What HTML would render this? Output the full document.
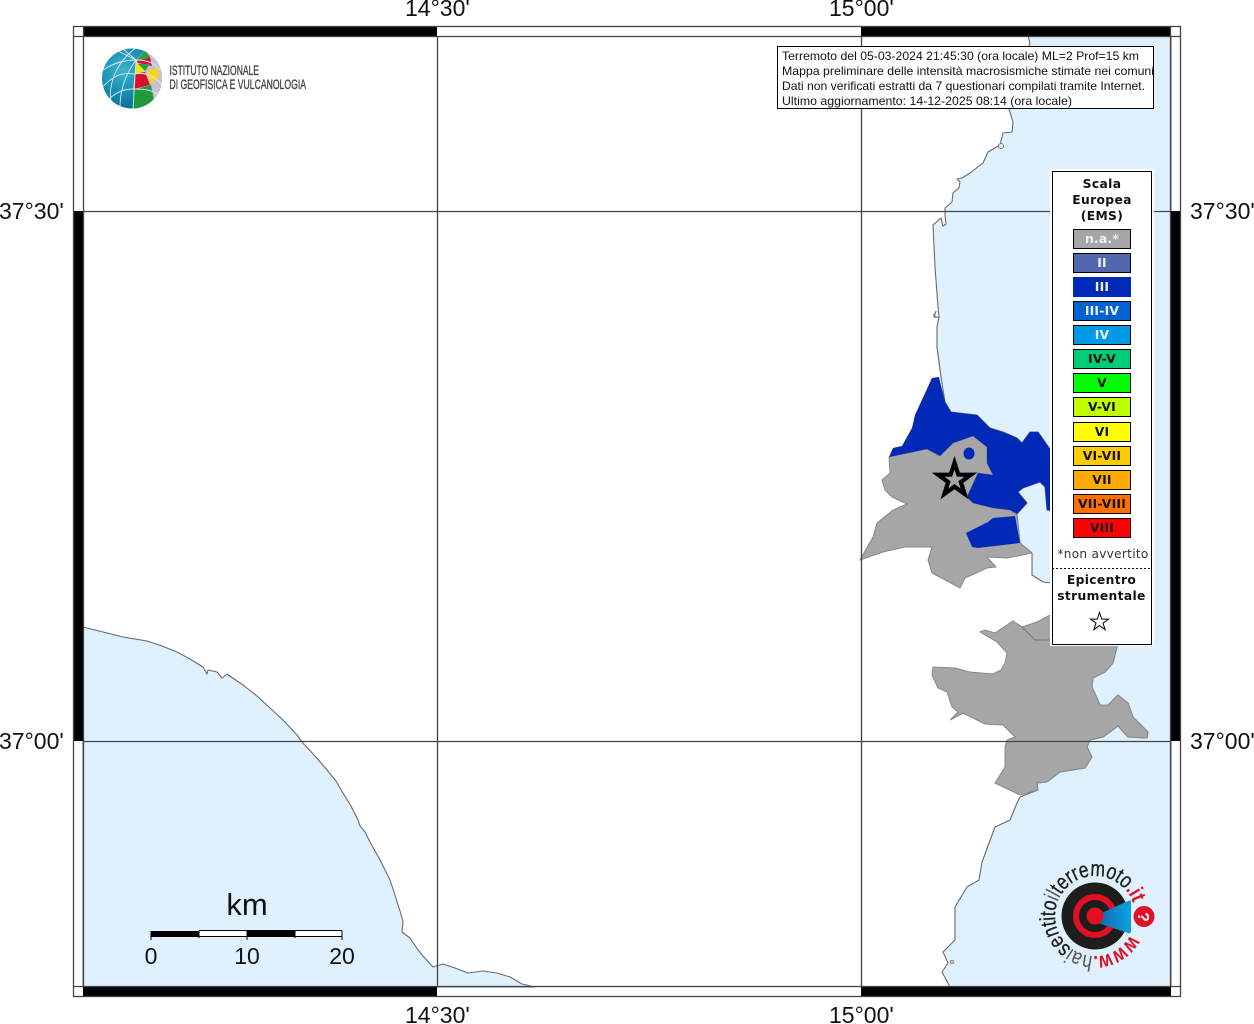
<!DOCTYPE html>
<html><head><meta charset="utf-8"><style>
html,body{margin:0;padding:0;background:#fff;width:1254px;height:1024px;overflow:hidden}
svg{display:block}
.ax{font-family:"Liberation Sans",sans-serif;font-size:23px;fill:#111}
.lg{font-family:"DejaVu Sans",sans-serif;font-size:12.3px;font-weight:bold;text-anchor:middle;letter-spacing:.35px}
.sw{font-family:"DejaVu Sans",sans-serif;font-size:12.4px;font-weight:bold;text-anchor:middle;letter-spacing:.2px}
.info{font-family:"Liberation Sans",sans-serif;font-size:12px;fill:#111}
</style></head><body>
<svg width="1254" height="1024" viewBox="0 0 1254 1024" xmlns="http://www.w3.org/2000/svg">
<rect width="1254" height="1024" fill="#fff"/>
<!-- sea -->
<path d="M83 627L103 632L123 637L147 641L162 646L177 652L190 659L203 667L207 674L208 670L217 672L222 678L227 674L243 685L257 696L270 708L284 721L297 735L302 742L315 756L327 770L336 781L343 793L351 806L358 820L360 826L365 832L370 842L380 860L390 880L394 892L398 905L401 914L403 922L402 932L410 938L416 947L422 955L433 967L443 964L455 968L468 973L483 971L497 973L510 977L522 984L535 987L83 987Z" fill="#dff1ff" stroke="#6a6a6a" stroke-width="1.1" stroke-linejoin="round"/>
<path d="M1028 36L1030 43L1018 75L1009 109L1013 122L1012 132L1003 133L1000 145L988 152L983 163L970 173L962 178L957 179L960 182L959 188L953 193L952 202L945 208L945 215L946 224L943 226L941 218L933 225L935 267L938 307L939 317L937 327L937 347L941 377L945 402L951 412L977 415L990 428L1003 432L1017 438L1022 443L1030 432L1038 432L1052 452L1052 510L1047 510L1045 487L1040 482L1023 488L1018 492L1027 503L1017 514L1020 543L1032 553L1032 575L1043 582L1052 583L1115 640L1117 647L1113 663L1105 672L1093 678L1092 687L1100 705L1108 705L1118 695L1128 703L1133 717L1148 732L1147 738L1128 737L1118 726L1103 737L1090 740L1087 747L1092 757L1085 768L1060 772L1047 782L1037 783L1038 790L1020 797L1017 803L1010 820L995 827L982 862L979 880L967 887L955 907L955 940L943 952L948 963L942 972L950 987L1171 987L1171 36Z" fill="#dff1ff" stroke="#6a6a6a" stroke-width="1.1" stroke-linejoin="round"/>
<circle cx="952" cy="962" r="1.5" fill="none" stroke="#777"/>
<circle cx="1001" cy="146" r="2.5" fill="#dff1ff" stroke="#777"/>
<path d="M939 317L934 317L936 311M936 317L933 314" fill="none" stroke="#777" stroke-width="1.2"/>
<!-- grey land -->
<path d="M889 457L927 449L940 456L953 443L973 436L987 447L987 463L993 475L978 473L967 497L973 503L993 508L1010 510L1017 515L1020 543L1032 553L1007 558L987 557L996 567L987 568L965 578L960 588L932 573L928 560L932 547L905 547L883 552L860 560L873 537L877 523L893 510L907 504L892 497L885 490L882 480L890 473Z" fill="#a6a6a6" stroke="#888" stroke-width="1"/>
<path d="M980 632L985 630L995 633L1013 621L1022 627L1037 622L1050 615L1115 640L1117 647L1113 663L1105 672L1093 678L1092 687L1100 705L1108 705L1118 695L1128 703L1133 717L1148 732L1147 738L1128 737L1118 726L1103 737L1090 740L1087 747L1092 757L1085 768L1060 772L1047 782L1037 783L1038 790L1020 795L995 783L1005 767L1005 747L1007 740L1015 737L1003 725L985 724L963 713L950 720L958 712L952 707L947 692L938 688L932 675L933 667L955 668L970 672L993 674L1001 670L1005 663L1007 653L997 642Z" fill="#a6a6a6" stroke="#888" stroke-width="1"/>
<path d="M1022 627L1035 640L1050 640" fill="none" stroke="#777"/>
<!-- blue land -->
<path d="M889 457L893 448L902 446L912 428L915 415L932 378L939 377L945 402L951 412L977 415L990 428L1003 432L1017 438L1022 443L1030 432L1038 432L1052 452L1052 512L1047 510L1045 487L1040 482L1023 488L1018 492L1027 503L1017 514L1010 510L993 508L973 503L967 497L978 473L993 475L987 463L987 447L973 436L953 443L940 456L927 449Z" fill="#0029b8"/>
<path d="M966 533L988 522L993 518L1015 516L1020 543L978 548L972 547Z" fill="#0029b8"/>
<ellipse cx="969" cy="453.500" rx="5.500" ry="6" fill="#0029b8"/>
<!-- grid -->
<g stroke="#444" stroke-width="1.3">
<line x1="437.500" y1="36" x2="437.500" y2="987"/>
<line x1="861.500" y1="36" x2="861.500" y2="987"/>
<line x1="83" y1="211.500" x2="1171" y2="211.500"/>
<line x1="83" y1="741.500" x2="1171" y2="741.500"/>
</g>
<!-- frame -->
<rect x="83" y="26" width="354" height="10" fill="#000"/>
<rect x="861" y="26" width="310" height="10" fill="#000"/>
<rect x="83" y="987" width="354" height="10" fill="#000"/>
<rect x="861" y="987" width="310" height="10" fill="#000"/>
<rect x="73" y="211" width="10" height="530" fill="#000"/>
<rect x="1171" y="211" width="10" height="530" fill="#000"/>
<g stroke="#444" stroke-width="1.3" fill="none">
<rect x="73.500" y="26.500" width="1107" height="970"/>
<rect x="83.500" y="36.500" width="1087" height="950"/>
<path d="M73 36.500H83M83.500 26V36M1171 36.500H1181M1170.500 26V36M73 986.500H83M1171 986.500H1181"/>
</g>
<!-- star -->
<polygon transform="translate(954.500 480)" points="0,-24 5.400,-7.400 22.800,-7.400 8.800,2.900 14.100,19.400 0,9.200 -14.100,19.400 -8.800,2.900 -22.800,-7.400 -5.400,-7.400" fill="#000"/>
<polygon transform="translate(954.500 480)" points="0,-10.500 2.360,-3.250 10,-3.250 3.850,1.270 6.170,8.500 0,4 -6.170,8.500 -3.850,1.270 -10,-3.250 -2.360,-3.250" fill="#a6a6a6"/>
<!-- axis labels -->
<g class="ax">
<text x="405" y="16">14°30'</text>
<text x="829" y="16">15°00'</text>
<text x="405" y="1023">14°30'</text>
<text x="829" y="1023">15°00'</text>
<text x="-1" y="219">37°30'</text>
<text x="-1" y="749">37°00'</text>
<text x="1190" y="219">37°30'</text>
<text x="1190" y="749">37°00'</text>
</g>
<!-- info box -->
<rect x="777.500" y="46.500" width="376" height="62" fill="#fff" stroke="#000"/>
<g class="info">
<text x="782" y="60" textLength="357" lengthAdjust="spacingAndGlyphs">Terremoto del 05-03-2024 21:45:30 (ora locale) ML=2 Prof=15 km</text>
<text x="782" y="75" textLength="372" lengthAdjust="spacingAndGlyphs">Mappa preliminare delle intensità macrosismiche stimate nei comuni</text>
<text x="782" y="90" textLength="363" lengthAdjust="spacingAndGlyphs">Dati non verificati estratti da 7 questionari compilati tramite Internet.</text>
<text x="782" y="105" textLength="290" lengthAdjust="spacingAndGlyphs">Ultimo aggiornamento: 14-12-2025 08:14 (ora locale)</text>
</g>
<!-- legend -->
<rect x="1050" y="169" width="104" height="477" fill="#fff" shape-rendering="crispEdges"/>
<rect x="1052.500" y="171.500" width="99" height="473" fill="#fff" stroke="#000" shape-rendering="crispEdges"/>
<g class="lg" fill="#111">
<text x="1102" y="188">Scala</text>
<text x="1102" y="204">Europea</text>
<text x="1102" y="220">(EMS)</text>
<text x="1101.500" y="584">Epicentro</text>
<text x="1101.500" y="600">strumentale</text>
</g>
<g shape-rendering="crispEdges" stroke="#000">
<rect x="1073.500" y="229.500" width="57" height="19" fill="#a6a6a6"/>
<rect x="1073.500" y="253.500" width="57" height="19" fill="#5267ae"/>
<rect x="1073" y="277" width="58" height="20" fill="#0029b8" stroke="none"/>
<rect x="1073.500" y="301.500" width="57" height="19" fill="#0063d0"/>
<rect x="1073.500" y="325.500" width="57" height="19" fill="#0099e6"/>
<rect x="1073.500" y="349.500" width="57" height="19" fill="#00cc77"/>
<rect x="1073.500" y="373.500" width="57" height="19" fill="#00ff00"/>
<rect x="1073.500" y="397.500" width="57" height="19" fill="#bfff00"/>
<rect x="1073.500" y="422.500" width="57" height="19" fill="#ffff00"/>
<rect x="1073.500" y="446.500" width="57" height="19" fill="#ffcc00"/>
<rect x="1073.500" y="470.500" width="57" height="19" fill="#ffaa00"/>
<rect x="1073.500" y="494.500" width="57" height="19" fill="#ff7000"/>
<rect x="1073.500" y="518.500" width="57" height="19" fill="#ff0000"/>
</g>
<g class="sw" fill="#f2f2f2">
<text x="1102" y="243">n.a.*</text>
<text x="1102" y="267">II</text>
<text x="1102" y="291">III</text>
<text x="1102" y="315">III-IV</text>
<text x="1102" y="339">IV</text>
</g>
<g class="sw" fill="#111">
<text x="1102" y="363">IV-V</text>
<text x="1102" y="387">V</text>
<text x="1102" y="411">V-VI</text>
<text x="1102" y="436">VI</text>
<text x="1102" y="460">VI-VII</text>
<text x="1102" y="484">VII</text>
<text x="1102" y="508">VII-VIII</text>
<text x="1102" y="532">VIII</text>
</g>
<text x="1103" y="558" font-family="'DejaVu Sans',sans-serif" font-size="12.100" text-anchor="middle" fill="#333" letter-spacing=".3">*non avvertito</text>
<line x1="1052" y1="568.500" x2="1151" y2="568.500" stroke="#000" stroke-dasharray="2 2" shape-rendering="crispEdges"/>
<polygon transform="translate(1099.500 622)" points="0,-9.500 2.200,-2.900 9,-2.900 3.500,1.100 5.600,7.700 0,3.600 -5.600,7.700 -3.500,1.100 -9,-2.900 -2.200,-2.900" fill="#fff" stroke="#000" stroke-width="1"/>
<!-- scale bar -->
<g shape-rendering="crispEdges">
<rect x="151" y="931" width="48" height="6" fill="#000"/>
<rect x="247" y="931" width="48" height="6" fill="#000"/>
<rect x="199" y="931" width="48" height="5" fill="#fff"/>
<rect x="295" y="931" width="47" height="5" fill="#fff"/>
<path d="M199 930.500H342M199 936.500H342M151 931V940M199 931V938M247 931V940M295 931V938M342 931V940" stroke="#000" fill="none"/>
</g>
<text x="247" y="915" font-family="'Liberation Sans',sans-serif" font-size="31" text-anchor="middle" fill="#111">km</text>
<g font-family="'Liberation Sans',sans-serif" font-size="23" text-anchor="middle" fill="#111">
<text x="151" y="964">0</text>
<text x="247" y="964">10</text>
<text x="342" y="964">20</text>
</g>
<!-- INGV logo -->
<defs>
<radialGradient id="gl" cx="35%" cy="35%" r="75%"><stop offset="0" stop-color="#3fb4cf"/><stop offset=".6" stop-color="#1487ad"/><stop offset="1" stop-color="#0a5f86"/></radialGradient>
<clipPath id="gc"><circle cx="132" cy="78.500" r="30"/></clipPath>
<linearGradient id="cone" x1="0" x2="1"><stop offset="0" stop-color="#1262ad"/><stop offset="1" stop-color="#0aa2e2"/></linearGradient>
</defs>
<circle cx="132" cy="78.500" r="30" fill="url(#gl)"/>
<g clip-path="url(#gc)">
<polygon points="136,60 145,50 160,45 170,110 150,115 133,112 133,90" fill="#c9c2d2"/>
<polygon points="136.500,60.500 145,50 150,57" fill="#2f9e3f"/>
<polygon points="137,61 150,57 152,66 138,63" fill="#d8102c"/>
<polygon points="138,64 150,64 145,71" fill="#2f9e3f"/>
<polygon points="147,72 157,67 159,77 150,84" fill="#f3d91a"/>
<polygon points="135,74 145,72 150,85 134,89" fill="#d8102c"/>
<polygon points="133,90 151,85 153,95 155,110 133,112" fill="#1f9a3a"/>
<polygon points="136,62 141,67 145,71 135,74" fill="#f3e21a"/>
<g fill="none" stroke="#d7ecf2" stroke-width=".9">
<path d="M136 48C118 60 106 85 112 106"/>
<path d="M136 60C125 75 120 90 120 107"/>
<path d="M136 60L133 110"/>
<path d="M103 70C115 62 127 60 136 60C146 60 155 63 160 70"/>
<path d="M102 88C112 76 122 72 134 74C146 72 155 76 162 85"/>
<path d="M108 100C116 92 124 89 133 89C142 89 152 89 160 96"/>
<path d="M136 60L116 50"/>
<path d="M136 60L122 48"/>
</g>
</g>
<g font-family="'Liberation Sans Narrow','Liberation Sans',sans-serif" font-size="13.500" fill="#444" stroke="#444" stroke-width=".35">
<text x="169.500" y="75" textLength="89.500" lengthAdjust="spacingAndGlyphs">ISTITUTO NAZIONALE</text>
<text x="169.500" y="89" textLength="136.500" lengthAdjust="spacingAndGlyphs">DI GEOFISICA E VULCANOLOGIA</text>
</g>
<!-- hai sentito logo -->
<circle cx="1095" cy="916" r="33.500" fill="#1d1d1b"/>
<circle cx="1095" cy="916" r="19" fill="none" stroke="#e30f25" stroke-width="6"/>
<path d="M1095 916L1129 900.500Q1131 900 1131 902V931Q1131 934 1128 933L1095 922Z" fill="url(#cone)"/>
<circle cx="1095" cy="916" r="8.500" fill="#e30f25"/>
<circle cx="1144" cy="916.500" r="10.500" fill="#e30f25"/>
<text transform="translate(1144 917) rotate(90)" font-family="'Liberation Sans',sans-serif" font-weight="bold" font-size="16" fill="#fff" text-anchor="middle" y="6">?</text>
<path id="arc" d="M1130.300 934.800A40 40 0 1 1 1133.500 905" fill="none"/>
<text font-family="'Liberation Sans',sans-serif" font-size="22" fill="#1d1d1b" textLength="218" lengthAdjust="spacingAndGlyphs"><textPath href="#arc"><tspan fill="#e30f25" font-weight="bold">www.</tspan><tspan fill="#555">hai</tspan><tspan stroke="#1d1d1b" stroke-width=".3">sentito</tspan><tspan fill="#555">il</tspan><tspan stroke="#1d1d1b" stroke-width=".3">terremoto</tspan><tspan fill="#e30f25" font-weight="bold">.it</tspan></textPath></text>
</svg>
</body></html>
